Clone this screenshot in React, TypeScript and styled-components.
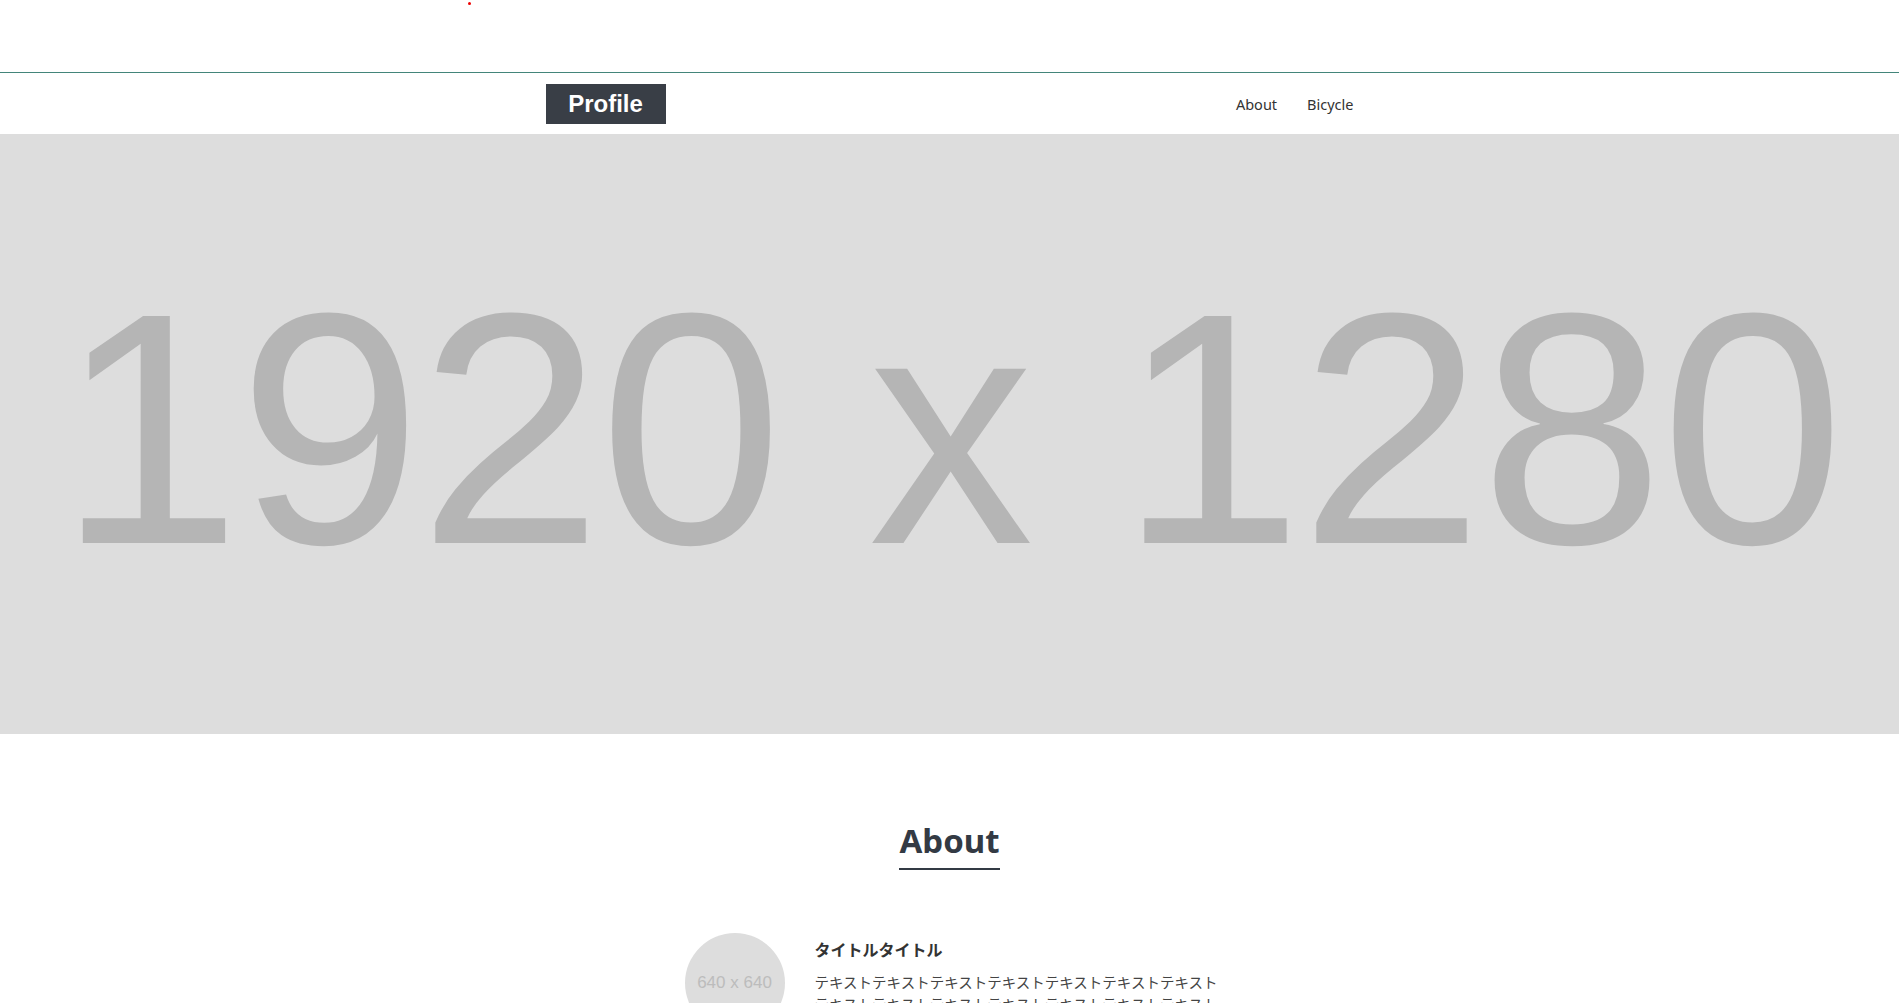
import styled, { createGlobalStyle } from "styled-components";

const GlobalStyle = createGlobalStyle`
  * {
    box-sizing: border-box;
  }
  body {
    margin: 0;
    background: #fff;
    color: #333;
    font-family: "Noto Sans", "Noto Sans CJK JP", sans-serif;
  }
  h1, h2, h3, p {
    margin: 0;
  }
`;

const TopArea = styled.div`
  height: 72px;
  display: flex;
  align-items: flex-start;
`;

const Dot = styled.span`
  width: 3px;
  height: 3px;
  margin: 2px 0 0 468px;
  border-radius: 50%;
  background: #e00;
`;

const Header = styled.header`
  border-top: 1px solid #43857a;
  height: 62px;
  display: flex;
  align-items: center;
`;

const Inner = styled.div`
  width: 808px;
  margin: 0 auto;
  display: flex;
  align-items: center;
  justify-content: space-between;
`;

const Logo = styled.h1`
  width: 120px;
  height: 40px;
  margin-top: 1px;
  display: flex;
  align-items: center;
  justify-content: center;
  background: #393e46;
  color: #fff;
  font-family: "Liberation Sans", Arial, sans-serif;
  font-size: 24px;
  font-weight: 700;
`;

const Nav = styled.nav`
  display: flex;
  gap: 30px;
  margin-top: 1px;
`;

const NavLink = styled.a`
  font-size: 14.5px;
  color: #333;
  text-decoration: none;
`;

const Hero = styled.div`
  height: 600px;
  padding-bottom: 10px;
  background: #dddddd;
  display: flex;
  align-items: center;
  justify-content: center;
  overflow: hidden;
`;

const HeroText = styled.span`
  font-family: "Liberation Sans", Arial, sans-serif;
  font-size: 330px;
  line-height: 1;
  letter-spacing: -3px;
  color: #b5b5b5;
  white-space: nowrap;
`;

const Section = styled.section`
  padding: 83px 0 80px;
  display: flex;
  flex-direction: column;
  align-items: center;
`;

const Heading = styled.h2`
  font-size: 33px;
  font-weight: 700;
  line-height: 1.45;
  color: #333a44;
  padding-bottom: 3px;
  border-bottom: 2px solid #333a44;
`;

const Row = styled.div`
  margin-top: 63px;
  display: flex;
  gap: 30px;
  padding-left: 10px;
`;

const Avatar = styled.div`
  width: 100px;
  height: 100px;
  flex-shrink: 0;
  border-radius: 50%;
  background: #dddddd;
  display: flex;
  align-items: center;
  justify-content: center;
  font-family: "Liberation Sans", Arial, sans-serif;
  font-size: 17px;
  color: #bcbcbc;
`;

const TextCol = styled.div`
  width: 410px;
  padding-top: 5px;
`;

const Title = styled.h3`
  font-size: 16px;
  font-weight: 700;
  line-height: 24px;
  color: #333;
  margin-bottom: 10px;
`;

const Body = styled.p`
  font-size: 14.5px;
  line-height: 1.5;
  color: #444;
`;

const text = "テキスト".repeat(21);

export default function App() {
  return (
    <>
      <GlobalStyle />
      <TopArea>
        <Dot />
      </TopArea>
      <Header>
        <Inner>
          <Logo>Profile</Logo>
          <Nav>
            <NavLink href="#about">About</NavLink>
            <NavLink href="#bicycle">Bicycle</NavLink>
          </Nav>
        </Inner>
      </Header>
      <Hero>
        <HeroText>1920 x 1280</HeroText>
      </Hero>
      <Section id="about">
        <Heading>About</Heading>
        <Row>
          <Avatar>640 x 640</Avatar>
          <TextCol>
            <Title>タイトルタイトル</Title>
            <Body>{text}</Body>
          </TextCol>
        </Row>
      </Section>
    </>
  );
}
